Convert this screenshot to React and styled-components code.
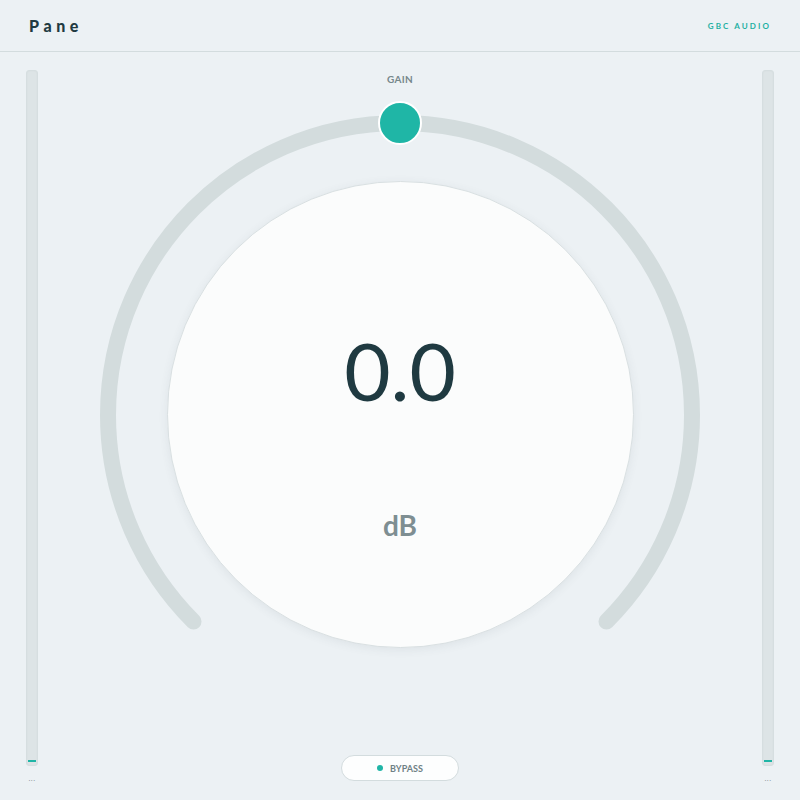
import React from 'react';
import styled, { createGlobalStyle } from 'styled-components';

const GlobalStyle = createGlobalStyle`
  html, body {
    margin: 0;
    padding: 0;
    background: #ecf1f4;
  }
  body {
    font-family: Lato, "Open Sans", "Liberation Sans", sans-serif;
  }
`;

const Page = styled.div`
  width: 800px;
  height: 800px;
  display: flex;
  flex-direction: column;
  background: #ecf1f4;
  overflow: hidden;
`;

const Header = styled.header`
  height: 52px;
  flex: 0 0 52px;
  box-sizing: border-box;
  border-bottom: 1px solid #d3dcde;
  display: flex;
  align-items: center;
  justify-content: space-between;
  padding: 0 29px 0 29px;
`;

const Title = styled.h1`
  margin: 0;
  font-size: 16px;
  font-weight: 900;
  letter-spacing: 4.6px;
  color: #1f3a41;
`;

const Brand = styled.span`
  font-size: 8px;
  font-weight: 700;
  letter-spacing: 2.1px;
  color: #1fb0a2;
`;

const Main = styled.main`
  flex: 1;
  display: flex;
  justify-content: space-between;
  padding: 18px 26px 0;
`;

const MeterColumn = styled.div`
  display: flex;
  flex-direction: column;
  align-items: center;
  width: 12px;
`;

const MeterTrack = styled.div`
  width: 12px;
  height: 696px;
  box-sizing: border-box;
  border-radius: 3px;
  background: #dde4e6;
  border: 1px solid #d6dee0;
  box-shadow: inset 0 0 2px rgba(0, 0, 0, 0.04);
  display: flex;
  flex-direction: column;
  justify-content: flex-end;
  align-items: center;
  padding-bottom: 3px;
`;

const MeterLevel = styled.div`
  width: 8px;
  height: 2px;
  background: #1fb5a6;
`;

const MeterValue = styled.span`
  margin-top: 7px;
  font-size: 8px;
  line-height: 10px;
  color: #8d9a9d;
  letter-spacing: 0.5px;
`;

const Center = styled.section`
  display: flex;
  flex-direction: column;
  align-items: center;
  padding-top: 3px;
`;

const Label = styled.div`
  font-size: 10px;
  line-height: 12px;
  font-weight: 700;
  color: #76878b;
  letter-spacing: 0.3px;
`;

const Dial = styled.div`
  margin-top: 30px;
  width: 600px;
  height: 540px;
  display: grid;
  justify-items: center;
  align-items: start;

  & > * {
    grid-area: 1 / 1;
  }
`;

const Arc = styled.svg`
  width: 600px;
  height: 540px;
  overflow: visible;
`;

const Face = styled.div`
  margin-top: 66px;
  width: 467px;
  height: 467px;
  box-sizing: border-box;
  border-radius: 50%;
  background: #fbfcfc;
  border: 1px solid #d9e0e2;
  box-shadow: 0 2px 10px rgba(60, 80, 90, 0.08);
  display: flex;
  flex-direction: column;
  align-items: center;
  padding-top: 148px;
`;

const Value = styled.div`
  font-size: 80px;
  line-height: 80px;
  font-weight: 400;
  color: #1f3a41;
`;

const Unit = styled.div`
  margin-top: 101px;
  font-size: 28px;
  line-height: 28px;
  font-weight: 700;
  color: #7e8e92;
`;

const Bypass = styled.button`
  margin-top: 100px;
  width: 118px;
  height: 26px;
  box-sizing: border-box;
  border-radius: 13px;
  background: #fdfefe;
  border: 1px solid #d3dcde;
  display: flex;
  align-items: center;
  justify-content: center;
  gap: 7px;
  font-family: inherit;
  font-size: 9px;
  font-weight: 700;
  color: #6f8185;
  padding: 0;
  cursor: pointer;
`;

const Dot = styled.span`
  width: 6px;
  height: 6px;
  border-radius: 50%;
  background: ${p => (p.active ? '#1fb5a6' : '#c9d2d4')};
`;

const Meter = ({ value }) => (
  <MeterColumn>
    <MeterTrack>
      <MeterLevel />
    </MeterTrack>
    <MeterValue>{value}</MeterValue>
  </MeterColumn>
);

// arc runs from -135deg to +135deg around the top, knob at 0dB
const cx = 300;
const cy = 300;
const r = 292;
const pt = deg => {
  const a = (deg * Math.PI) / 180;
  return [cx + r * Math.sin(a), cy - r * Math.cos(a)];
};

const GainDial = ({ value }) => {
  const [sx, sy] = pt(-135);
  const [ex, ey] = pt(135);
  const [kx, ky] = pt(0);
  return (
    <Dial>
      <Arc viewBox="0 0 600 540">
        <path
          d={`M ${sx} ${sy} A ${r} ${r} 0 1 1 ${ex} ${ey}`}
          fill="none"
          stroke="#d3dcdd"
          strokeWidth="16"
          strokeLinecap="round"
        />
        <circle cx={kx} cy={ky} r="21" fill="#1fb6a6" stroke="#ffffff" strokeWidth="2" />
      </Arc>
      <Face>
        <Value>{value}</Value>
        <Unit>dB</Unit>
      </Face>
    </Dial>
  );
};

const App = () => (
  <Page>
    <GlobalStyle />
    <Header>
      <Title>Pane</Title>
      <Brand>GBC AUDIO</Brand>
    </Header>
    <Main>
      <Meter value="..." />
      <Center>
        <Label>GAIN</Label>
        <GainDial value="0.0" />
        <Bypass>
          <Dot active />
          BYPASS
        </Bypass>
      </Center>
      <Meter value="..." />
    </Main>
  </Page>
);

export default App;
